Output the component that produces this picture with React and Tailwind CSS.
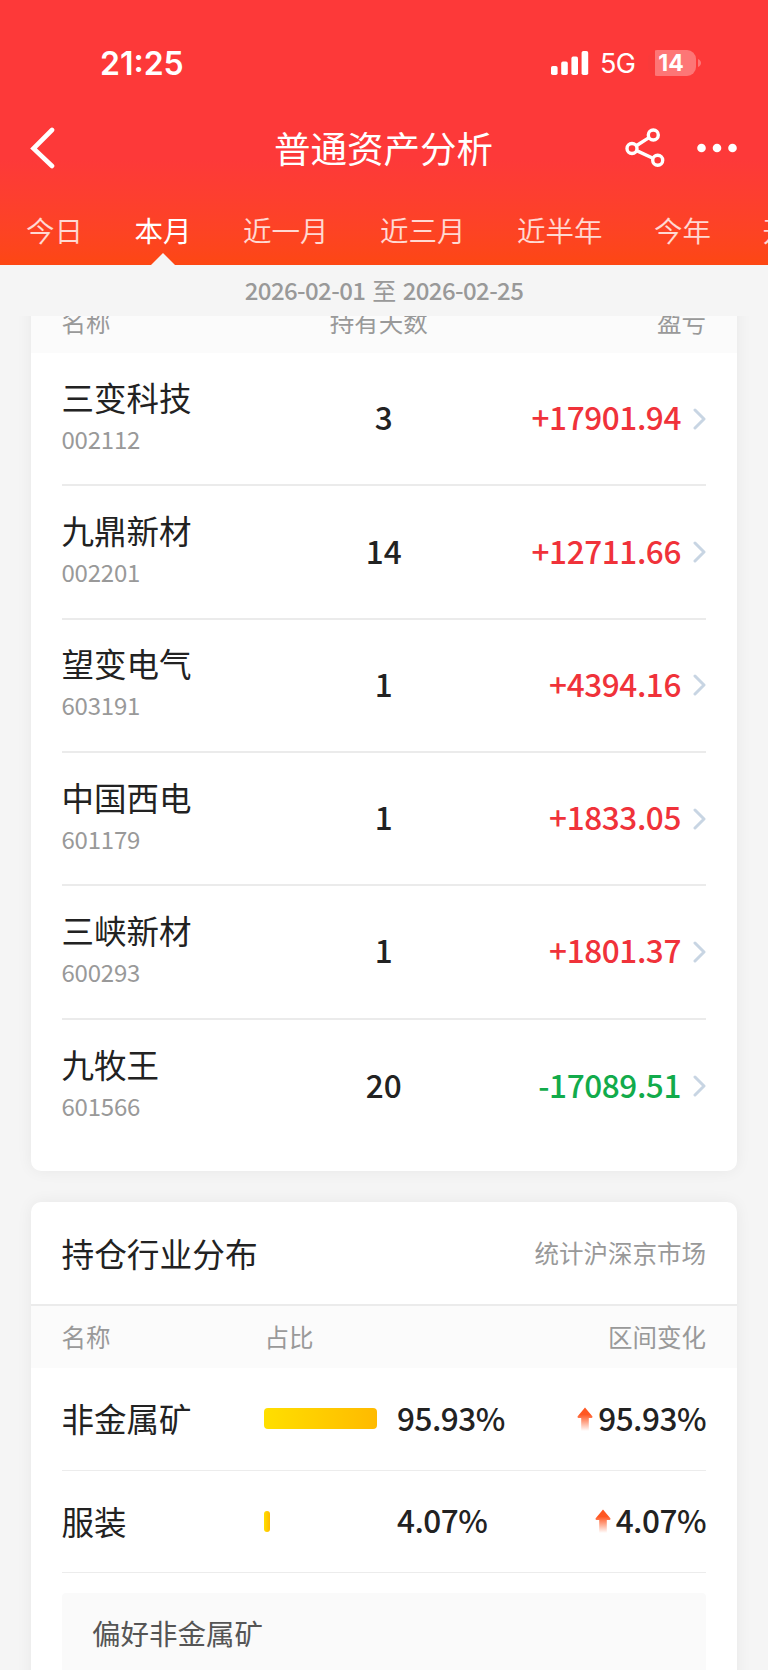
import clsx from "clsx";

const tabs = ["今日", "本月", "近一月", "近三月", "近半年", "今年", "开户至今"];

const stocks = [
  { name: "三变科技", code: "002112", days: 3, profit: "+17901.94" },
  { name: "九鼎新材", code: "002201", days: 14, profit: "+12711.66" },
  { name: "望变电气", code: "603191", days: 1, profit: "+4394.16" },
  { name: "中国西电", code: "601179", days: 1, profit: "+1833.05" },
  { name: "三峡新材", code: "600293", days: 1, profit: "+1801.37" },
  { name: "九牧王", code: "601566", days: 20, profit: "-17089.51" },
];

const industries = [
  { name: "非金属矿", ratio: "95.93%", change: "95.93%", width: 113 },
  { name: "服装", ratio: "4.07%", change: "4.07%", width: 5.5 },
];

function StatusBar() {
  return (
    <div className="flex h-[100px] items-center justify-between pt-[25px] pr-[67px] pl-[100px] text-white font-['Inter',sans-serif]">
      <span className="pt-[2px] text-[32px] font-semibold leading-none">
        21:25
      </span>
      <div className="flex items-center">
        <svg width="38" height="24" viewBox="0 0 38 24" fill="currentColor">
          <rect x="0" y="15" width="6.600" height="9" rx="1.800" />
          <rect x="10.200" y="10.600" width="6.600" height="13.400" rx="1.800" />
          <rect x="20.400" y="5.600" width="6.600" height="18.400" rx="1.800" />
          <rect x="30.600" y="0" width="6.600" height="24" rx="1.800" />
        </svg>
        <span className="ml-[11px] pt-[2px] text-[27px] leading-none tracking-[-0.800px]">
          5G
        </span>
        <div className="ml-[13px] flex h-[26px] w-[48px] items-center justify-center overflow-hidden rounded-[9px] bg-linear-to-r from-[#f93a3a] from-14% to-[#fd7676] to-14% pt-[2px] pr-[2px] text-[23px] font-bold leading-none">
          14
        </div>
        <svg className="ml-[2px]" width="3" height="8" viewBox="0 0 3 8">
          <path d="M0 0c4 1.500 4 6.500 0 8z" fill="#fd7676" />
        </svg>
      </div>
    </div>
  );
}

function NavBar() {
  return (
    <div className="grid h-[96px] grid-cols-3 items-center pr-[31px] pl-[30px] text-white">
      <svg width="26" height="42" viewBox="0 0 26 42" fill="none">
        <path
          d="M22 3L3.500 21.500L22 39"
          stroke="currentColor"
          strokeWidth="4.600"
          strokeLinecap="round"
        />
      </svg>
      <h1 className="text-center text-[36.500px] leading-none whitespace-nowrap">
        普通资产分析
      </h1>
      <div className="flex items-center justify-end gap-[31px]">
        <svg width="42" height="42" viewBox="0 0 42 42" fill="none">
          <g stroke="currentColor" strokeWidth="3.400">
            <circle cx="29.300" cy="8" r="5" />
            <circle cx="8" cy="21.500" r="5" />
            <circle cx="33.700" cy="33.200" r="5" />
            <path d="M12.300 18.800L25 10.600M12.600 23.600L29 31.200" />
          </g>
        </svg>
        <svg width="40" height="10" viewBox="0 0 40 10" fill="currentColor">
          <circle cx="4.500" cy="5" r="4.300" />
          <circle cx="20" cy="5" r="4.300" />
          <circle cx="35.500" cy="5" r="4.300" />
        </svg>
      </div>
    </div>
  );
}

function Tabs({ active }) {
  return (
    <ul className="flex h-[69px] gap-[51.500px] overflow-hidden pl-[26px]">
      {tabs.map((tab) => (
        <li
          key={tab}
          className={clsx(
            "flex shrink-0 flex-col items-center justify-between text-[28.500px] whitespace-nowrap",
            tab === active ? "text-white" : "font-[350] text-white/80"
          )}
        >
          <span className="pt-[14px] leading-[40px]">{tab}</span>
          {tab === active && (
            <svg width="24" height="12" viewBox="0 0 24 12">
              <path d="M0 12L12 0L24 12z" fill="#f5f5f5" />
            </svg>
          )}
        </li>
      ))}
    </ul>
  );
}

function Chevron() {
  return (
    <svg width="13" height="22" viewBox="0 0 13 22" fill="none">
      <path
        d="M2 2L11 11L2 20"
        stroke="#c8d5e3"
        strokeWidth="3"
        strokeLinecap="round"
        strokeLinejoin="round"
      />
    </svg>
  );
}

function StockRow({ item, last }) {
  const up = item.profit.startsWith("+");
  return (
    <li
      className={clsx(
        "grid h-[133.300px] grid-cols-3 items-center",
        !last && "border-b-2 border-[#ebebeb]"
      )}
    >
      <div className="pb-[7px]">
        <p className="text-[32.500px] leading-[44px] text-[#222]">
          {item.name}
        </p>
        <p className="pt-[3px] text-[24px] leading-[34px] tracking-[-0.200px] text-[#999]">
          {item.code}
        </p>
      </div>
      <span className="pb-[4px] text-center text-[31.500px] font-medium text-[#222]">
        {item.days}
      </span>
      <div className="flex items-center justify-end gap-[12px]">
        <span
          className={clsx(
            "pb-[4px] text-[31.500px] font-medium tracking-[-0.400px]",
            up ? "text-[#f0323a]" : "text-[#12ab4b]"
          )}
        >
          {item.profit}
        </span>
        <Chevron />
      </div>
    </li>
  );
}

function UpArrow() {
  return (
    <svg width="16" height="24" viewBox="0 0 16 24">
      <defs>
        <linearGradient id="rise" x1="0" y1="0" x2="0" y2="1">
          <stop offset="0.300" stopColor="#ff5722" />
          <stop offset="1" stopColor="#ff5722" stopOpacity="0" />
        </linearGradient>
      </defs>
      <path
        d="M8 0.500L15.500 9.500Q15.500 11 14.500 11H11.800V24H4.200V11H1.500Q0.500 11 0.500 9.500z"
        fill="url(#rise)"
      />
    </svg>
  );
}

function IndustryRow({ item }) {
  return (
    <li className="flex h-[102.500px] items-center border-b border-[#ececec] text-[31.500px] text-[#222]">
      <span className="w-[202.500px] text-[32.500px]">{item.name}</span>
      <div className="w-[133px]">
        <div
          className="h-[21px] rounded-[4px] bg-linear-to-r from-[#ffdf00] to-[#ffba00]"
          style={{ width: item.width }}
        />
      </div>
      <span className="pb-[3px] font-medium tracking-[-0.500px]">
        {item.ratio}
      </span>
      <div className="ml-auto flex items-center gap-[5px]">
        <UpArrow />
        <span className="pb-[3px] font-medium tracking-[-0.500px]">
          {item.change}
        </span>
      </div>
    </li>
  );
}

export default function App() {
  return (
    <div className="h-[1670px] w-[768px] overflow-hidden bg-[#f5f5f5] font-['Noto_Sans_CJK_SC',sans-serif]">
      <header className="h-[265px] bg-linear-to-b from-[#fd3939] from-60% to-[#fd4713]">
        <StatusBar />
        <NavBar />
        <Tabs active="本月" />
      </header>

      <div className="flex h-[51px] items-center justify-center gap-[7px] pb-[2px] text-[24px] font-medium tracking-[-0.600px] text-[#999]">
        <span>2026-02-01</span>
        <span className="font-normal">至</span>
        <span>2026-02-25</span>
      </div>

      <main className="flex h-[1354px] flex-col gap-[31px] overflow-hidden px-[31px]">
        {/* the list is scrolled a little under the date bar */}
        <section className="-mt-[25px] h-[880px] shrink-0 rounded-b-[10px] bg-white shadow-[0_0_16px_rgba(0,0,0,0.06)]">
          <div className="grid h-[62.200px] grid-cols-3 items-center bg-[#fbfbfb] pr-[31px] pl-[30.500px] text-[24.500px] text-[#999]">
            <span>名称</span>
            <span className="pr-[10px] text-center">持有天数</span>
            <span className="text-right">盈亏</span>
          </div>
          <ul className="pr-[31px] pl-[30.500px]">
            {stocks.map((item, index) => (
              <StockRow
                key={item.code}
                item={item}
                last={index === stocks.length - 1}
              />
            ))}
          </ul>
        </section>

        <section className="h-[520px] shrink-0 rounded-t-[10px] bg-white shadow-[0_0_16px_rgba(0,0,0,0.06)]">
          <div className="flex h-[104px] items-center justify-between border-b-2 border-[#ebebeb] pr-[31px] pl-[30.500px]">
            <h2 className="text-[32.700px] text-[#222]">持仓行业分布</h2>
            <span className="text-[24.500px] text-[#999]">统计沪深京市场</span>
          </div>
          <div className="flex h-[62px] items-center bg-[#fbfbfb] pr-[31px] pl-[30.500px] text-[24.500px] text-[#999]">
            <span className="w-[203px]">名称</span>
            <span>占比</span>
            <span className="ml-auto">区间变化</span>
          </div>
          <div className="pr-[31px] pl-[30.500px]">
            <ul>
              {industries.map((item) => (
                <IndustryRow key={item.name} item={item} />
              ))}
            </ul>
            <div className="mt-[20px] h-[120px] rounded-[4px] bg-[#fafafa] px-[30.500px] pt-[19px] text-[28.500px] leading-[42px] text-[#555]">
              偏好非金属矿
            </div>
          </div>
        </section>
      </main>
    </div>
  );
}
